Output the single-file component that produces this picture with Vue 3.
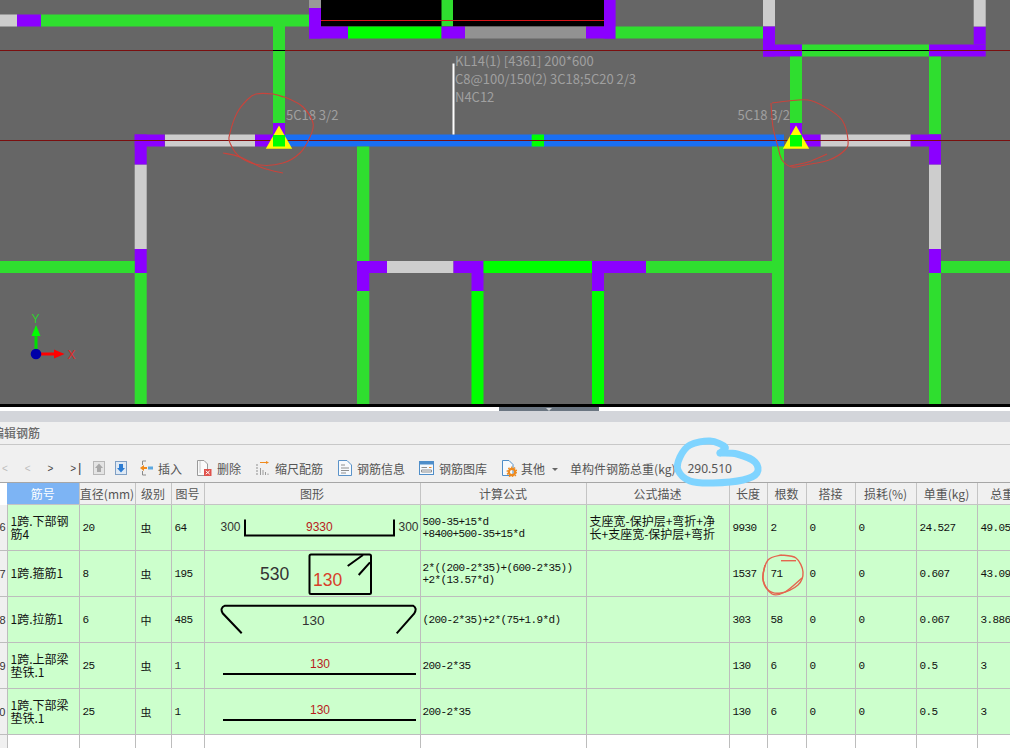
<script setup>
// 平面图：[x, y, w, h, 色]
const G = '#2fde2f'
const B = '#00ff00'
const P = '#8b00ff'
const L = '#cdcdcd'
const blocks = [
  [0, 14.5, 17, 12, L], [17, 14.5, 24, 12, P], [41, 14.5, 268, 12, G],
  [273, 26, 12, 97, G], [273, 123, 12, 12, P],
  [309, 0, 12, 8, '#999999'], [321, 0, 283, 26.5, '#000000'], [441.5, 0, 11.5, 26.5, G],
  [309, 8, 12, 30.5, P], [309, 26.5, 39, 12, P], [348, 26.5, 93.5, 12, B],
  [441.5, 26.5, 23.5, 12, P], [465, 26.5, 121, 12, '#929292'], [586, 26.5, 29.6, 12, P],
  [604, 0, 11.6, 38.5, P], [615.6, 26.5, 147.4, 12, G],
  [763, 0, 12, 26.5, L], [763, 26.5, 12, 30, P], [763, 44.5, 39, 12, P],
  [802, 44.5, 127, 12, G], [929, 44.5, 56.7, 12, P], [973.7, 26.5, 12, 18, P], [973.7, 0, 12, 26.5, L],
  [790, 56.5, 12, 66.5, G], [929, 56.5, 12, 78, G],
  [134.7, 134.5, 30, 12, P], [134.7, 134.5, 12, 30.2, P], [165, 134.5, 90, 12, L], [255, 134.5, 30, 12, P],
  [285, 134.5, 499, 12, '#1a6ff2'], [531.7, 134.5, 12.3, 12, B],
  [790, 123, 12, 12, P], [802, 134.5, 18.7, 12, P], [820.7, 134.5, 90, 12, L],
  [910.7, 134.5, 30.3, 12, P], [929, 134.5, 12, 30.2, P], [929, 164.7, 12, 84.3, L], [929, 249, 12, 24, P],
  [929, 273, 12, 131, G], [941, 261, 69, 12, G],
  [134.7, 164.7, 12, 84.3, L], [134.7, 249, 12, 24, P], [134.7, 273, 12, 131, G], [0, 261, 134.7, 12, G],
  [357, 146.5, 12.3, 114.5, G], [357, 261, 30, 12, P], [357, 261, 12.3, 30, P], [357, 291, 12.3, 113, G],
  [387, 261, 66.5, 12, L], [453.5, 261, 30, 12, P], [471.5, 261, 12, 30, P], [471.5, 291, 12, 113, B],
  [483.5, 261, 108.5, 12, B], [592, 261, 54, 12, P], [592, 261, 12, 30, P], [592, 291, 12, 113, B],
  [646, 261, 126, 12, G], [772, 146.5, 12, 257.5, G]
]

// 手描きの線を点列から滑らかなパスにする
const smooth = (pts) => {
  let d = `M${pts[0][0]} ${pts[0][1]}`
  for (let i = 0; i < pts.length - 1; i++) {
    const p0 = pts[i - 1] || pts[i]
    const p1 = pts[i]
    const p2 = pts[i + 1]
    const p3 = pts[i + 2] || p2
    const c1x = p1[0] + (p2[0] - p0[0]) / 6
    const c1y = p1[1] + (p2[1] - p0[1]) / 6
    const c2x = p2[0] - (p3[0] - p1[0]) / 6
    const c2y = p2[1] - (p3[1] - p1[1]) / 6
    d += ` C${c1x.toFixed(1)} ${c1y.toFixed(1)} ${c2x.toFixed(1)} ${c2y.toFixed(1)} ${p2[0]} ${p2[1]}`
  }
  return d
}

const redMarks = [
  smooth([[283, 97], [273, 94], [256, 94], [247, 100], [237, 113], [230, 133], [230, 143], [240, 157], [260, 165], [283, 163], [300, 153], [310, 137], [313, 123], [303, 107], [287, 98], [273, 94]]),
  smooth([[223, 153], [240, 157], [263, 168], [283, 173]]),
  smooth([[772, 103], [788, 101], [808, 100], [825, 107], [842, 120], [848, 140], [845, 150], [829, 160], [805, 165], [792, 167], [782, 160], [778, 147], [773, 127], [771, 103]]),
  smooth([[827, 154], [808, 162], [790, 166]])
]
const ringMarks = [
  smooth([[781, 555], [796, 558], [803, 572], [798, 585], [781, 593], [768, 590], [763, 577], [768, 560], [781, 555]]),
  smooth([[765, 565], [763, 580], [772, 594], [785, 592], [802, 578]]),
  'M781 560.7 L796 560.7'
]
const cloud = smooth([[720, 453], [725, 447], [710, 441], [690, 445], [680, 457], [678, 470], [690, 481], [713, 483], [743, 480], [757, 473], [755, 462], [737, 454], [720, 453]])

const columns = [
  { label: '', width: 7 }, { label: '筋号', width: 72, selected: true }, { label: '直径(mm)', width: 56 },
  { label: '级别', width: 36 }, { label: '图号', width: 33 }, { label: '图形', width: 216 },
  { label: '计算公式', width: 166 }, { label: '公式描述', width: 143 }, { label: '长度', width: 38 },
  { label: '根数', width: 39 }, { label: '搭接', width: 49 }, { label: '损耗(%)', width: 61 },
  { label: '单重(kg)', width: 61 }, { label: '总重(kg)', width: 72 }
]

const rows = [
  { no: 6, name: '1跨.下部钢筋4', dia: '20', grade: '虫', code: '64', top: 505, shape: 'bracket',
    formula: ['500-35+15*d', '+8400+500-35+15*d'], desc: '支座宽-保护层+弯折+净长+支座宽-保护层+弯折',
    len: '9930', count: '2', lap: '0', loss: '0', unit: '24.527', total: '49.054' },
  { no: 7, name: '1跨.箍筋1', dia: '8', grade: '虫', code: '195', top: 551, shape: 'stirrup',
    formula: ['2*((200-2*35)+(600-2*35))', '+2*(13.57*d)'], desc: '',
    len: '1537', count: '71', lap: '0', loss: '0', unit: '0.607', total: '43.097' },
  { no: 8, name: '1跨.拉筋1', dia: '6', grade: '中', code: '485', top: 597, shape: 'tie',
    formula: ['(200-2*35)+2*(75+1.9*d)'], desc: '',
    len: '303', count: '58', lap: '0', loss: '0', unit: '0.067', total: '3.886' },
  { no: 9, name: '1跨.上部梁垫铁.1', dia: '25', grade: '虫', code: '1', top: 643, shape: 'line',
    formula: ['200-2*35'], desc: '',
    len: '130', count: '6', lap: '0', loss: '0', unit: '0.5', total: '3' },
  { no: 10, name: '1跨.下部梁垫铁.1', dia: '25', grade: '虫', code: '1', top: 689, shape: 'line',
    formula: ['200-2*35'], desc: '',
    len: '130', count: '6', lap: '0', loss: '0', unit: '0.5', total: '3' }
]
</script>

<template>
  <div class="app">
    <svg class="plan" width="1010" height="404" viewBox="0 0 1010 404">
      <rect width="1010" height="404" fill="#666666" />
      <rect v-for="(b, i) in blocks" :key="i" :x="b[0]" :y="b[1]" :width="b[2]" :height="b[3]" :fill="b[4]" />
      <line x1="321" y1="20.5" x2="604" y2="20.5" stroke="#d8141a" />
      <line x1="0" y1="50.5" x2="1010" y2="50.5" stroke="#7a0f0f" />
      <line x1="273" y1="50.5" x2="285" y2="50.5" stroke="#000" />
      <line x1="802" y1="50.5" x2="929" y2="50.5" stroke="#000" />
      <line x1="0" y1="140.5" x2="1010" y2="140.5" stroke="#7a0f0f" />
      <rect x="452.5" y="63.5" width="2" height="71" fill="#ffffff" />

      <g v-for="cx in [279, 796]" :key="cx">
        <polygon :points="`${cx},125.5 ${cx + 13.2},148.7 ${cx - 13.2},148.7`" fill="#ffff00" />
        <rect :x="cx - 6" y="135" width="12" height="11.5" fill="#00ff00" />
      </g>

      <text class="cad" x="455" y="65.5">KL14(1) [4361] 200*600</text>
      <text class="cad" x="455" y="83.5">C8@100/150(2) 3C18;5C20 2/3</text>
      <text class="cad" x="455" y="101.5">N4C12</text>
      <text class="cad" x="286" y="119.5">5C18 3/2</text>
      <text class="cad" x="737.5" y="119.5">5C18 3/2</text>

      <!-- 座標軸 -->
      <rect x="34.5" y="332" width="3" height="18" fill="#00e000" />
      <polygon points="36,325 40.5,336 31.5,336" fill="#00ff00" />
      <rect x="41" y="352.5" width="14" height="3" fill="#ff0000" />
      <polygon points="64.5,354 54,349.5 54,358.5" fill="#ff0000" />
      <circle cx="36" cy="354" r="5.3" fill="#0000a8" />
      <text class="axis-y" x="31.5" y="323">Y</text>
      <text class="axis-x" x="67.5" y="359">X</text>
    </svg>

    <div class="sash"><div class="grip"><i></i></div></div>
    <div class="gap"></div>
    <div class="title"><span>编辑钢筋</span></div>

    <div class="toolbar">
      <div class="nav">
        <span class="off">&lt;</span>
        <span class="off">&lt;</span>
        <span>&gt;</span>
        <span>&gt;<b>|</b></span>
      </div>
      <svg class="ico-up" width="12" height="14" viewBox="0 0 12 14">
        <rect x="0.5" y="0.5" width="11" height="13" fill="#e4e4e4" stroke="#b8b8b8" />
        <path d="M6 2.5 L10 7 H8 V11 H4 V7 H2 Z" fill="#a8a8a8" />
      </svg>
      <svg class="ico-down" width="12" height="14" viewBox="0 0 12 14">
        <rect x="0.5" y="0.5" width="11" height="13" fill="#dfe9f4" stroke="#7f9fc4" />
        <path d="M6 11.5 L10 7 H8 V3 H4 V7 H2 Z" fill="#2b7cd3" />
      </svg>

      <div class="tool">
        <svg width="13" height="16" viewBox="0 0 13 16">
          <path d="M6 1 H2.5 V5 M2.5 11 V15 H6" fill="none" stroke="#8a8a8a" />
          <path d="M0 8 L4 5 V7 H7 V9 H4 V11 Z" fill="#f08a1c" />
          <rect x="8" y="6.5" width="5" height="3" fill="#5ba7e0" />
        </svg>
        <span>插入</span>
      </div>
      <div class="tool tight">
        <svg width="16" height="16" viewBox="0 0 16 16">
          <path d="M1.5 0.5 H8 L11.5 4 V15.5 H1.5 Z" fill="#fafafa" stroke="#9a9a9a" />
          <path d="M4 1 V13" stroke="#c8c8c8" />
          <rect x="8" y="9" width="7.5" height="7" fill="#e0524c" />
          <path d="M9.8 10.8 L13.7 14.2 M13.7 10.8 L9.8 14.2" stroke="#fff" />
        </svg>
        <span>删除</span>
      </div>
      <div class="tool">
        <svg width="14" height="16" viewBox="0 0 14 16">
          <path d="M1 4 V15" stroke="#8f8f8f" stroke-dasharray="2 1" />
          <path d="M4 2.5 H10" stroke="#f08a1c" />
          <path d="M10 1 L13 2.5 L10 4 Z" fill="#f08a1c" />
          <path d="M4.5 8 V15 M7 10 V15 M9.5 12 V15 M12 13.5 V15" stroke="#9a9a9a" />
        </svg>
        <span>缩尺配筋</span>
      </div>
      <div class="tool">
        <svg width="14" height="16" viewBox="0 0 14 16">
          <path d="M0.5 0.5 H9 L13.5 5 V15.5 H0.5 Z" fill="#f7fafd" stroke="#5b93c9" />
          <path d="M3 5 H7 M3 8 H11 M3 10.5 H11 M3 13 H8" stroke="#8f8f8f" />
        </svg>
        <span>钢筋信息</span>
      </div>
      <div class="tool tight">
        <svg width="15" height="14" viewBox="0 0 15 14">
          <rect x="0.5" y="0.5" width="14" height="13" fill="#f7fafd" stroke="#4f8ec9" />
          <rect x="1" y="1" width="13" height="2.5" fill="#4f8ec9" />
          <path d="M2.5 6.5 H8 M2.5 9 V11 H12.5 V9 H2.5" fill="none" stroke="#8f8f8f" />
          <path d="M10 6.5 H12.5" stroke="#e88a2c" />
        </svg>
        <span>钢筋图库</span>
      </div>
      <div class="tool tool-narrow">
        <svg width="15" height="17" viewBox="0 0 15 17">
          <path d="M0.5 0.5 H7 L11 4.5 V15.5 H0.5 Z" fill="#f7fafd" stroke="#4f8ec9" />
          <circle cx="10" cy="12" r="3.2" fill="none" stroke="#ee8a1e" stroke-width="2.2" />
          <circle cx="10" cy="12" r="4.8" fill="none" stroke="#ee8a1e" stroke-dasharray="1.5 1.5" stroke-width="1.3" />
        </svg>
        <span>其他</span>
      </div>
      <i class="caret"></i>
      <span class="total-label">单构件钢筋总重(kg)</span>
      <span class="total-value">290.510</span>
    </div>

    <table class="grid">
      <colgroup>
        <col v-for="c in columns" :key="c.label" :style="{ width: c.width + 'px' }" />
      </colgroup>
      <thead>
        <tr>
          <th v-for="c in columns" :key="c.label" :class="{ selected: c.selected, corner: !c.label }">{{ c.label }}</th>
        </tr>
      </thead>
      <tbody>
        <tr v-for="r in rows" :key="r.no" class="filled">
          <td class="no"><span>{{ r.no }}</span></td>
          <td class="cjk">{{ r.name }}</td>
          <td>{{ r.dia }}</td>
          <td class="grade">{{ r.grade }}</td>
          <td>{{ r.code }}</td>
          <td class="shape">
            <svg width="216" height="45" :viewBox="`205 ${r.top} 216 45`">
              <template v-if="r.shape === 'bracket'">
                <path d="M245 519.5 V535.5 H394 V519.5" class="bar" />
                <text class="dim" x="220.5" y="531">300</text>
                <text class="dim red" x="306" y="531">9330</text>
                <text class="dim" x="398.5" y="531">300</text>
              </template>
              <template v-else-if="r.shape === 'stirrup'">
                <rect x="309.5" y="554.5" width="61.5" height="39.5" rx="1.5" class="bar" />
                <path d="M347.7 566 L363 555 M358.7 575 L370 562.3" class="bar" />
                <text class="big" x="260" y="580">530</text>
                <text class="big orange" x="313" y="586">130</text>
              </template>
              <template v-else-if="r.shape === 'tie'">
                <path d="M241.7 633.3 L222.7 613.3 Q219.5 608 225 605.7 H413 Q417.5 608 414.3 613.3 L396.7 633.3" class="bar" />
                <text class="mid" x="302" y="625">130</text>
              </template>
              <template v-else>
                <path :d="`M223 ${r.top + 31} H416`" class="bar" />
                <text class="dim red" x="310" :y="r.top + 25">130</text>
              </template>
            </svg>
          </td>
          <td class="formula"><div v-for="f in r.formula" :key="f">{{ f }}</div></td>
          <td class="cjk desc">{{ r.desc }}</td>
          <td>{{ r.len }}</td>
          <td>{{ r.count }}</td>
          <td>{{ r.lap }}</td>
          <td>{{ r.loss }}</td>
          <td>{{ r.unit }}</td>
          <td>{{ r.total }}</td>
        </tr>
        <tr>
          <td class="no"><span>11</span></td>
          <td v-for="n in 13" :key="n"></td>
        </tr>
      </tbody>
    </table>

    <!-- 赤ペン・青ペンの書き込み -->
    <svg class="marks" width="1010" height="748" viewBox="0 0 1010 748">
      <path v-for="(d, i) in redMarks" :key="i" :d="d" class="pen-red" />
      <path v-for="(d, i) in ringMarks" :key="'r' + i" :d="d" class="pen-ring" />
      <path :d="cloud" class="pen-blue" />
    </svg>
  </div>
</template>

<style scoped>
.app {
  position: relative;
  width: 1010px;
  height: 748px;
  overflow: hidden;
  background: #fff;
  font-family: "Noto Sans CJK SC", "Liberation Sans", sans-serif;
  font-size: 12px;
  color: #555;
}

.plan {
  display: block;
}

.cad {
  font-family: "Noto Sans CJK SC", "Noto Sans", sans-serif;
  font-size: 13px;
  fill: #a0a0a0;
}

.axis-y,
.axis-x {
  font-family: "Liberation Sans", sans-serif;
  font-size: 12px;
}

.axis-y {
  fill: #2fd02f;
}

.axis-x {
  fill: #e02828;
}

.sash {
  height: 4px;
  padding-left: 499px;
  border-top: 3px solid #000;
  background: #fff;
}

.grip {
  position: relative;
  width: 100px;
  height: 4px;
  background: #6b7682;
}

.grip i {
  position: absolute;
  top: 1px;
  left: 47px;
  border-top: 3px solid #c8ccd0;
  border-left: 3px solid transparent;
  border-right: 3px solid transparent;
}

.gap {
  height: 11px;
  background: #d3d5da;
}

.title {
  height: 22px;
  line-height: 22px;
  background: #f0f0f0;
  border-bottom: 1px solid #c8c8c8;
  color: #6a6a6a;
  font-weight: 500;
  overflow: hidden;
}

.title span {
  margin-left: -8px;
}

.toolbar {
  display: flex;
  align-items: center;
  height: 38px;
  padding: 9px 0 0 2px;
  box-sizing: border-box;
  background: #f0f0f0;
  border-bottom: 1px solid #a6a6a6;
  white-space: nowrap;
}

.nav {
  display: flex;
  width: 91px;
  font-family: "Liberation Sans", sans-serif;
  font-size: 10px;
  color: #444;
}

.nav span {
  width: 23px;
}

.nav .off {
  color: #bdbdbd;
}

.nav b {
  margin-left: 2px;
  font-weight: normal;
  font-size: 13px;
  line-height: 10px;
}

.ico-down {
  margin-left: 10px;
}

.tool {
  display: flex;
  align-items: center;
  gap: 5px;
  margin-left: 15px;
}

.ico-down + .tool {
  margin-left: 13px;
}

.tool.tight {
  margin-left: 14px;
}

.tool-narrow {
  gap: 4px;
}

.caret {
  margin: 2px 0 0 7px;
  border-top: 3px solid #666;
  border-left: 3px solid transparent;
  border-right: 3px solid transparent;
}

.total-label {
  margin-left: 12px;
}

.total-value {
  margin-left: 12px;
  font-family: "Noto Sans", sans-serif;
  color: #555;
}

.grid {
  table-layout: fixed;
  width: 1049px;
  border-collapse: collapse;
  font-family: "Liberation Mono", monospace;
  font-size: 11px;
  letter-spacing: -0.6px;
  color: #111;
}

.grid th {
  height: 21px;
  padding: 0;
  background: #f0f0f0;
  border-right: 1px solid #c4c4c4;
  border-bottom: 1px solid #c4c4c4;
  font-family: "Noto Sans CJK SC", sans-serif;
  font-size: 12px;
  font-weight: normal;
  letter-spacing: 0;
  color: #555;
  white-space: nowrap;
}

.grid th.selected {
  background: #7db4f4;
  color: #fff;
}

.grid th.corner {
  background: #fff;
  border: none;
}

.grid td {
  height: 45px;
  padding: 0 2px 0 3px;
  border-right: 1px solid #bdbdbd;
  border-bottom: 1px solid #bdbdbd;
  line-height: 12px;
  overflow: hidden;
}

.filled td {
  background: #ccffcc;
}

.grid td.no {
  padding: 0;
  background: #f0f0f0;
  font-family: "Liberation Sans", sans-serif;
  font-size: 11px;
  letter-spacing: 0;
}

.no span {
  display: flex;
  justify-content: flex-end;
  padding-right: 1px;
  color: #333;
}

.grid td.cjk {
  font-family: "Noto Sans CJK SC", sans-serif;
  font-size: 12px;
  letter-spacing: 0;
  line-height: 12.5px;
  word-break: break-all;
}

.grid td.desc {
  padding-right: 6px;
}

.grid td.grade {
  padding-left: 5px;
  font-family: "Noto Sans CJK SC", sans-serif;
  font-size: 11px;
  letter-spacing: 0;
}

.grid td.shape {
  padding: 0;
}

.shape svg {
  display: block;
}

.bar {
  fill: none;
  stroke: #000;
  stroke-width: 2;
}

.dim,
.big,
.mid {
  font-family: "Liberation Sans", sans-serif;
  letter-spacing: 0;
  fill: #333;
}

.dim {
  font-size: 12px;
}

.big {
  font-size: 17.5px;
}

.mid {
  font-size: 13.5px;
}

.red {
  fill: #b81c1c;
}

.orange {
  fill: #d8402a;
}

.grid td.formula {
  padding-left: 2px;
  white-space: nowrap;
}

.marks {
  position: absolute;
  top: 0;
  left: 0;
  pointer-events: none;
}

.marks path {
  fill: none;
}

.pen-red {
  stroke: #c8443c;
  stroke-width: 1.1;
}

.pen-ring {
  stroke: #e4664f;
  stroke-width: 1.4;
}

.pen-blue {
  stroke: #7fd4ff;
  stroke-width: 7;
  stroke-linecap: round;
}
</style>
